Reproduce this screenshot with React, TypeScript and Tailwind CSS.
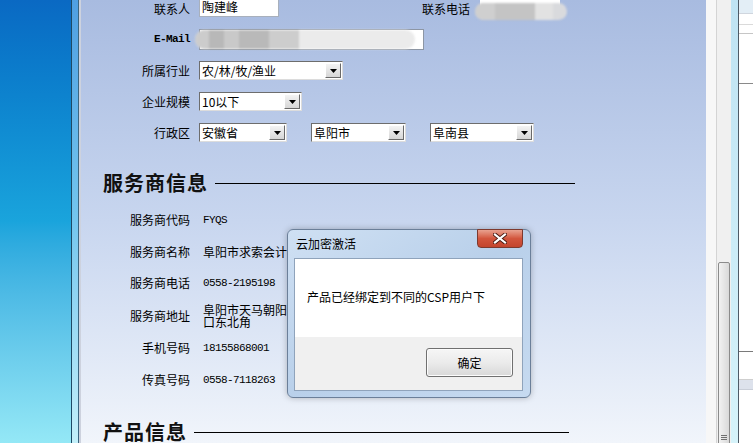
import React from 'react';

const cjk = "font-['Noto_Sans_CJK_SC',sans-serif]";
const mono = "font-['Liberation_Mono','Noto_Sans_CJK_SC',monospace]";

function Select({ width, text }: { width: number; text: string }) {
  return (
    <div
      className="relative h-[19px] bg-white border border-t-[#6d6d6d] border-l-[#6d6d6d] border-r-[#dcdcdc] border-b-[#dcdcdc] flex items-center"
      style={{ width }}
    >
      <span className={`pl-[2px] text-[12px] leading-none text-black ${cjk}`}>{text}</span>
      <div className="absolute right-[1px] top-[1px] bottom-[1px] w-[16px] bg-linear-to-b from-[#f4f4f4] to-[#d6d6d6] border border-t-[#ffffff] border-l-[#ffffff] border-r-[#6a6a6a] border-b-[#6a6a6a] flex items-center justify-center">
        <svg width="7" height="4" viewBox="0 0 7 4">
          <path d="M0 0h7L3.5 4z" fill="#000" />
        </svg>
      </div>
    </div>
  );
}

function FormRow({ label, children, className, labelClass }: { label: string; children: React.ReactNode; className?: string; labelClass?: string }) {
  return (
    <div className={`flex items-center ${className ?? ''}`}>
      <div className={`w-[109px] text-right leading-none text-black ${labelClass ?? `text-[12px] ${cjk}`}`}>{label}</div>
      <div className="ml-[9px] flex items-center">{children}</div>
    </div>
  );
}

function InfoRow({ label, children, className }: { label: string; children: React.ReactNode; className?: string }) {
  return (
    <div className={`flex items-center text-[12px] leading-[16px] ${className ?? ''}`}>
      <div className={`w-[109px] text-right text-black ${cjk}`}>{label}</div>
      <div className="ml-[13px] flex items-center">{children}</div>
    </div>
  );
}

function Heading({ title, line, className }: { title: string; line: number; className?: string }) {
  return (
    <div className={`flex items-center h-[24px] pl-[22px] ${className ?? ''}`}>
      <span className={`text-[20px] leading-none font-bold tracking-[1px] text-[#111] ${cjk}`}>{title}</span>
      <div className="ml-[7px] h-px bg-black" style={{ width: line }} />
    </div>
  );
}

function Dialog() {
  return (
    <div className="absolute left-[206px] top-[229px] w-[244px] h-[169px] rounded-[6px] border border-[#6b7f99] bg-linear-to-br from-[#cfe0f3] via-[#b9d0ea] to-[#c6daf0] shadow-[0_0_6px_rgba(0,0,0,0.25)]">
      <div className={`absolute left-[8px] top-[6px] text-[12px] leading-[16px] text-black ${cjk}`}>云加密激活</div>
      <div className="absolute right-[7px] -top-px w-[46px] h-[19px] rounded-b-[4px] border border-[#7d3a2f] bg-linear-to-b from-[#e8a18f] via-[#d2553d] to-[#c3452e] flex items-center justify-center">
        <svg width="14" height="11" viewBox="0 0 14 11">
          <path d="M2 1.5L12 9.5M12 1.5L2 9.5" stroke="#4a1a12" strokeWidth="4" strokeLinecap="square" />
          <path d="M2 1.5L12 9.5M12 1.5L2 9.5" stroke="#ffffff" strokeWidth="2.2" strokeLinecap="square" />
        </svg>
      </div>
      <div className="absolute left-[6px] right-[7px] top-[28px] bottom-[6px] border border-[#8fa3bb] flex flex-col">
        <div className="h-[78px] bg-white flex items-center pl-[12px] pb-[2px]">
          <span className={`text-[12px] leading-none text-black ${cjk}`}>产品已经绑定到不同的CSP用户下</span>
        </div>
        <div className="flex-1 bg-[#f0f0f0] flex justify-end items-start pt-[11px] pr-[9px]">
          <div className="w-[87px] h-[29px] rounded-[3px] border border-[#707070] bg-linear-to-b from-[#f6f6f6] via-[#ebebeb] to-[#d8d8d8] shadow-[inset_0_0_0_1px_#fcfcfc] flex items-center justify-center">
            <span className={`text-[12px] leading-none text-black ${cjk}`}>确定</span>
          </div>
        </div>
      </div>
    </div>
  );
}

export default function App() {
  const num = `text-[11px] tracking-[-0.6px] leading-[16px] ${mono}`;
  return (
    <div className="w-[753px] h-[443px] flex overflow-hidden">
      <div className="w-[71px] bg-linear-to-b from-[#0a69c3] via-[#1aa4dc] to-[#94e8f6]" />
      <div className="w-px bg-[#1e4a66]" />
      <div className="w-[6px] bg-linear-to-b from-[#4f9fe2] via-[#74c6ee] to-[#c3f0fa]" />
      <div className="w-px bg-[#3c6680]" />
      <div className="w-[2px] bg-[#cdd2de]" />

      <main className="relative w-[625px] bg-linear-to-b from-[#a8bbe0] via-[#c8d6ef] to-[#f1f5fb] overflow-hidden">
        <div className="flex flex-col">
          <div className="flex items-center -mt-[3px] h-[20px]">
            <FormRow label="联系人" className="mt-[3px]">
              <div className="w-[80px] h-[20px] -mt-[3px] bg-white border border-[#a8b0bc] flex items-center pl-[2px]">
                <span className={`text-[12px] leading-none ${cjk}`}>陶建峰</span>
              </div>
            </FormRow>
            <div className={`w-[191px] text-right text-[12px] leading-none text-black mt-[4px] ${cjk}`}>联系电话</div>
            <div className="relative ml-[10px] w-[80px] h-[20px] bg-white">
              <div className="absolute -left-[5px] top-[6px] w-[92px] h-[17px] rounded-full bg-[#d9dadd] blur-[1px] flex overflow-hidden">
                <div className="w-[20px] bg-[#cfcfcf]" />
                <div className="w-[40px] bg-[#c4c4c4]" />
                <div className="w-[18px] bg-[#e2e2e2]" />
              </div>
            </div>
          </div>

          <FormRow label="E-Mail" className="mt-[12px] h-[21px]" labelClass={`text-[11px] tracking-[-0.6px] font-bold ${mono}`}>
            <div className="relative w-[225px] h-[21px] bg-white border border-[#8d96a4]">
              <div className="absolute -left-[5px] top-0 w-[220px] h-[19px] rounded-full bg-[#ebebeb] blur-[1px] flex overflow-hidden">
                <div className="w-[14px] bg-[#cccccc]" />
                <div className="w-[15px] bg-[#b8b8b8]" />
                <div className="w-[15px] bg-[#c9c9c9]" />
                <div className="w-[30px] bg-[#b9b9b9]" />
                <div className="w-[30px] bg-[#cdcdcd]" />
              </div>
            </div>
          </FormRow>

          <FormRow label="所属行业" className="mt-[11px] h-[19px]">
            <Select width={144} text="农/林/牧/渔业" />
          </FormRow>
          <FormRow label="企业规模" className="mt-[12px] h-[19px]">
            <Select width={103} text="10以下" />
          </FormRow>
          <FormRow label="行政区" className="mt-[12px] h-[19px]">
            <div className="flex gap-[24px]">
              <Select width={88} text="安徽省" />
              <Select width={95} text="阜阳市" />
              <Select width={104} text="阜南县" />
            </div>
          </FormRow>

          <Heading title="服务商信息" line={360} className="mt-[29px]" />

          <InfoRow label="服务商代码" className="mt-[17px] h-[16px]">
            <span className={num}>FYQS</span>
          </InfoRow>
          <InfoRow label="服务商名称" className="mt-[16px] h-[16px]">
            <span className={`whitespace-nowrap ${cjk}`}>阜阳市求索会计服务有限公司</span>
          </InfoRow>
          <InfoRow label="服务商电话" className="mt-[15px] h-[16px]">
            <span className={num}>0558-2195198</span>
          </InfoRow>
          <InfoRow label="服务商地址" className="mt-[13px] h-[24px]">
            <div className={`w-[96px] leading-[12px] ${cjk}`}>阜阳市天马朝阳路口东北角</div>
          </InfoRow>
          <InfoRow label="手机号码" className="mt-[12px] h-[16px]">
            <span className={num}>18155868001</span>
          </InfoRow>
          <InfoRow label="传真号码" className="mt-[16px] h-[16px]">
            <span className={num}>0558-7118263</span>
          </InfoRow>

          <Heading title="产品信息" line={375} className="mt-[32px]" />
        </div>

        <Dialog />
      </main>

      <div className="w-[10px] bg-[#f7f7f7]" />
      <div className="relative w-[15px] bg-[#f0f0f0] border-l border-[#d4d4d4]">
        <div className="absolute left-[1px] right-[1px] top-[262px] bottom-[-20px] rounded-[2px] border border-[#8b8b8b] bg-linear-to-r from-[#f2f2f2] to-[#d9d9d9] flex justify-center">
          <div className="absolute bottom-[22px] w-[6px] flex flex-col gap-px">
            <div className="h-px bg-[#6f6f6f]" />
            <div className="h-px bg-[#6f6f6f]" />
            <div className="h-px bg-[#6f6f6f]" />
          </div>
        </div>
      </div>
      <div className="w-[7px] bg-linear-to-b from-[#bfe3f3] to-[#d6f3fa]" />
      <div className="w-px bg-[#4e5a66]" />
      <div className="flex-1 bg-white flex flex-col">
        <div className="h-[14px] bg-[#e3eef6] border-b border-[#d0d6de]" />
        <div className="h-[11px] border-b border-[#dadada]" />
        <div className="h-[9px] border-b border-[#c6c6c6]" />
        <div className="h-[50px] border-b border-[#8a8a8a]" />
        <div className="h-[268px] border-b border-[#7a7a7a]" />
        <div className="h-[28px] border-b border-[#cfcfcf]" />
        <div className="h-[10px] bg-[#dde2ec] border-b border-[#c9ced8]" />
      </div>
    </div>
  );
}
